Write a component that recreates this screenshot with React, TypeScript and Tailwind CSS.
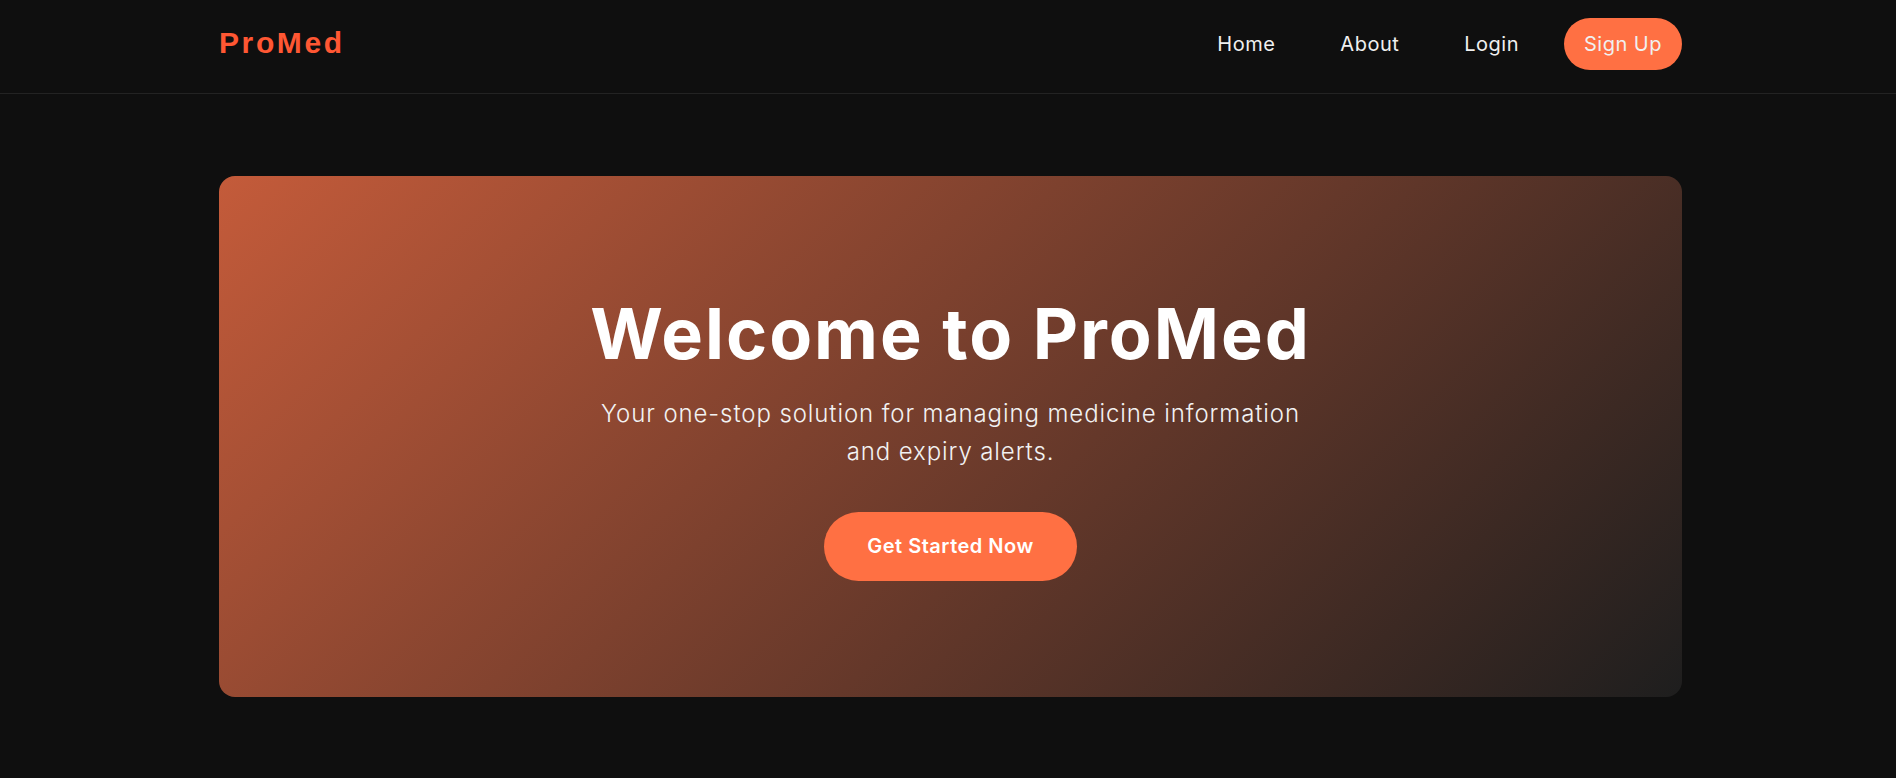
import React from 'react';

const navLinks = ['Home', 'About', 'Login'];

const App: React.FC = () => {
  return (
    <div className="min-h-screen bg-[#0f0f0f] text-white font-['Inter',sans-serif]">
      <header className="border-b border-[#232323]">
        <div className="w-[1463px] ml-[219px] pt-[18px] pb-[23px] flex items-center justify-between">
          <div className="pb-[2px] text-[30px] font-bold tracking-[2.6px] text-[#ff5733] font-['Liberation_Sans',Arial,sans-serif] leading-none">
            ProMed
          </div>
          <nav className="flex items-center gap-[25px]">
            {navLinks.map((l) => (
              <a key={l} href="#" className="px-5 text-[20px] tracking-[0.5px] text-[#f0f0f0] leading-[30px]">
                {l}
              </a>
            ))}
            <a href="#" className="px-5 py-[11px] rounded-full bg-[#ff7043] text-[20px] tracking-[0.5px] text-[#f0f0f0] leading-[30px]">
              Sign Up
            </a>
          </nav>
        </div>
      </header>

      <main className="w-[1463px] ml-[219px] pt-[82px]">
        <section className="h-[521px] rounded-2xl bg-[linear-gradient(135deg,#c45b3a,#1e1e1e)] flex flex-col items-center justify-center text-center">
          <h1 className="text-[70px] font-bold leading-[84px] tracking-[2px]">Welcome to ProMed</h1>
          <p className="mt-[19px] max-w-[720px] text-[24px] font-light leading-[38.4px] tracking-[0.9px] text-[#f2f2f2]">
            Your one-stop solution for managing medicine information and expiry alerts.
          </p>
          <button className="mt-[41px] px-[43px] py-[19px] rounded-full bg-[#ff7043] text-[20px] font-semibold leading-[31px] tracking-[0.5px] text-white">
            Get Started Now
          </button>
        </section>
      </main>
    </div>
  );
};

export default App;
